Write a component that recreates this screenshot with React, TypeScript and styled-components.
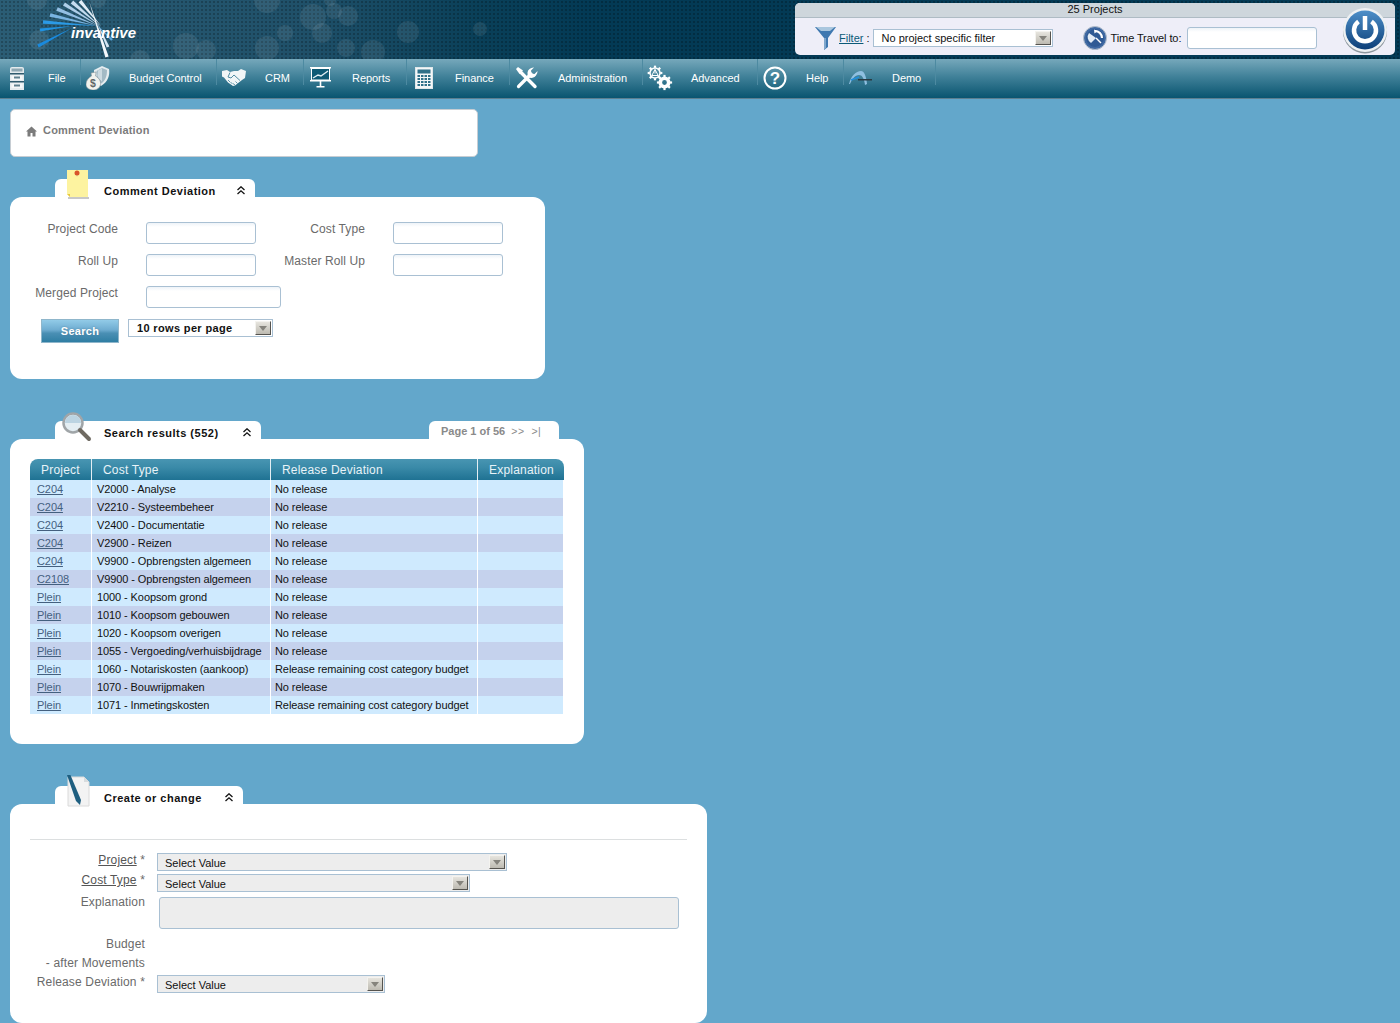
import * as React from 'react'
import styled, {createGlobalStyle} from 'styled-components';

const FONT = '"Liberation Sans", Arial, sans-serif';

const GlobalStyle = createGlobalStyle`
  html, body {
    margin: 0;
    padding: 0;
    background: #63a7cb;
    font-family: ${FONT};
    font-size: 11px;
  }
  * {
    box-sizing: border-box;
  }
`;

const NAV_ITEMS = [
  {label: 'File', icon: 'file', width: 81},
  {label: 'Budget Control', icon: 'budget', width: 136},
  {label: 'CRM', icon: 'crm', width: 87},
  {label: 'Reports', icon: 'reports', width: 103},
  {label: 'Finance', icon: 'finance', width: 103},
  {label: 'Administration', icon: 'tools', width: 133},
  {label: 'Advanced', icon: 'gears', width: 115},
  {label: 'Help', icon: 'help', width: 86},
  {label: 'Demo', icon: 'demo', width: 92},
];

const ROWS = [
  ['C204', 'V2000 - Analyse', 'No release'],
  ['C204', 'V2210 - Systeembeheer', 'No release'],
  ['C204', 'V2400 - Documentatie', 'No release'],
  ['C204', 'V2900 - Reizen', 'No release'],
  ['C204', 'V9900 - Opbrengsten algemeen', 'No release'],
  ['C2108', 'V9900 - Opbrengsten algemeen', 'No release'],
  ['Plein', '1000 - Koopsom grond', 'No release'],
  ['Plein', '1010 - Koopsom gebouwen', 'No release'],
  ['Plein', '1020 - Koopsom overigen', 'No release'],
  ['Plein', '1055 - Vergoeding/verhuisbijdrage', 'No release'],
  ['Plein', '1060 - Notariskosten (aankoop)', 'Release remaining cost category budget'],
  ['Plein', '1070 - Bouwrijpmaken', 'No release'],
  ['Plein', '1071 - Inmetingskosten', 'Release remaining cost category budget'],
];

const BOKEH = [
  [313, 17, 13], [348, 16, 10], [334, 11, 8], [322, 33, 10], [346, 48, 9], [373, 52, 12],
  [408, 32, 11], [285, 33, 8], [267, 0, 13], [267, 48, 12], [186, 46, 13], [206, 50, 10],
  [39, 40, 10], [37, 0, 10], [98, 0, 8], [330, 0, 6], [480, 29, 7], [140, 60, 10],
];

// outer x, outer y, inner x, inner y, half width, colour
const RAYS: Array<[number, number, number, number, number, string]> = [
  [38, 46, 72, 28, 1.6, '#1a8ade'],
  [40, 30, 72, 26, 1.6, '#1f92e2'],
  [43, 22, 97, 26, 1.8, '#2b9ae6'],
  [50, 15, 97, 26, 1.8, '#79b4e2'],
  [57, 9, 98, 26, 1.9, '#94bfe4'],
  [64, 4, 99, 26, 1.9, '#aecee9'],
  [72, 2, 100, 26, 1.9, '#c6ddf0'],
  [80, 1, 101, 26, 1.8, '#e2eef8'],
  [107, 57, 89, 1, 1.7, '#f4f8fc'],
  [108, 47, 97, 22, 1.5, '#d3e4f3'],
  [112, 40, 96, 24, 1.2, '#5aa6dc'],
];

const rayPoints = ([x1, y1, x2, y2, w]: [number, number, number, number, number, string]) => {
  const dx = x2 - x1;
  const dy = y2 - y1;
  const len = Math.sqrt(dx * dx + dy * dy);
  const nx = (-dy / len) * w;
  const ny = (dx / len) * w;
  return `${x1 + nx},${y1 + ny} ${x1 - nx},${y1 - ny} ${x2},${y2}`;
};

const Header = styled.header`
  position: relative;
  height: 59px;
  display: flex;
  background-color: #033a55;
  background-image:
    radial-gradient(rgba(0, 0, 0, 0.22) 1px, transparent 1px),
    linear-gradient(90deg, #2b5d75 0%, #1f5069 22%, #0a4059 34%, #033a55 42%);
  background-size: 4px 4px, 100% 100%;
  overflow: hidden;
`;

const BokehLayer = styled.svg`
  position: absolute;
  left: 0;
  top: 0;
`;

const LogoBox = styled.div`
  position: relative;
  width: 150px;
  height: 59px;
`;

const LogoText = styled.span`
  position: absolute;
  left: 71px;
  top: 24px;
  color: #fff;
  font: italic bold 15px/18px ${FONT};
`;

const ProjectPanel = styled.div`
  position: relative;
  width: 600px;
  height: 52px;
  margin: 3px 5px 0 auto;
  background: #eeeef8;
  border-radius: 5px;
`;

const ProjectCount = styled.div`
  height: 15px;
  background: #ced6dc;
  border-bottom: 1px solid #aebbc4;
  border-radius: 5px 5px 0 0;
  text-align: center;
  font-size: 11px;
  line-height: 13px;
  color: #111;
`;

const ProjectTools = styled.div`
  display: flex;
  align-items: center;
  height: 37px;
  padding: 3px 0 0 20px;
  color: #111;
`;

const FilterLink = styled.a`
  margin-left: 3px;
  color: #0b5a78;
  text-decoration: underline;
`;

const FilterColon = styled.span`
  margin: 0 3px 0 3px;
`;

const TimeIcon = styled.svg`
  margin: 0 4px 0 30px;
`;

const TimeLabel = styled.span`
  margin-right: 6px;
  letter-spacing: -0.1px;
  white-space: nowrap;
`;

const PowerButton = styled.svg`
  position: absolute;
  right: 7px;
  top: 3px;
`;

const NavBar = styled.nav`
  height: 40px;
  display: flex;
  background: linear-gradient(#76a8bb 0%, #3f8098 45%, #0a5570 97%, #5d7f90 97%);
`;

const NavItem = styled.a<{$width: number}>`
  position: relative;
  width: ${p => p.$width}px;
  height: 26px;
  padding-left: 48px;
  border-right: 1px solid #4d8aa1;
  color: #fff;
  font-size: 11px;
  letter-spacing: -0.05px;
  line-height: 38px;
  white-space: nowrap;
`;

const NavIcon = styled.span`
  position: absolute;
  left: 4px;
  top: 6px;
  width: 26px;
  height: 26px;
  display: flex;
  align-items: center;
  justify-content: center;
  color: #fff;
  line-height: 0;
`;

const Content = styled.main`
  padding: 10px 0 0 10px;
`;

const Breadcrumb = styled.div`
  width: 468px;
  height: 48px;
  display: flex;
  align-items: flex-start;
  gap: 6px;
  padding: 14px 0 0 15px;
  background: #fff;
  border: 1px solid #c6cdd3;
  border-radius: 5px;
  color: #7b7b7b;
  font-weight: bold;
  font-size: 11px;
  letter-spacing: 0.2px;
  line-height: 13px;
`;

const HomeIcon = styled.svg`
  margin-top: 2px;
`;

const Panel = styled.section<{$width: number; $gap: number}>`
  width: ${p => p.$width}px;
  margin-top: ${p => p.$gap}px;
`;

const TabRow = styled.div`
  display: flex;
  justify-content: space-between;
  padding: 0 25px 0 45px;
`;

const Tab = styled.div<{$width: number}>`
  position: relative;
  width: ${p => p.$width}px;
  height: 18px;
  padding: 6px 0 0 49px;
  display: flex;
  align-items: center;
  background: #fff;
  border-radius: 6px 6px 0 0;
  color: #111;
  font-weight: bold;
  font-size: 11px;
  letter-spacing: 0.5px;
  white-space: nowrap;
`;

const TabIcon = styled.svg<{$left: number; $drop: number}>`
  position: absolute;
  left: ${p => p.$left}px;
  bottom: -${p => p.$drop}px;
`;

const Chevrons = styled.svg`
  position: absolute;
  top: 7px;
  right: 10px;
`;

const Pager = styled.div`
  width: 130px;
  height: 18px;
  padding: 4px 0 0 12px;
  background: #fff;
  border-radius: 6px 6px 0 0;
  color: #8a8a8a;
  font-weight: bold;
  font-size: 11px;
  line-height: 12px;
  white-space: pre;
`;

const PagerArrows = styled.span`
  font-size: 10.5px;
  font-weight: normal;
  letter-spacing: 0.5px;
`;

const PanelBody = styled.div<{$pad: string}>`
  padding: ${p => p.$pad};
  background: #fff;
  border-radius: 12px;
`;

const FilterGrid = styled.div`
  display: grid;
  grid-template-columns: 108px 110px 81px 110px;
  grid-auto-rows: 22px;
  column-gap: 28px;
  row-gap: 10px;
  width: 100%;
`;

const FilterLabel = styled.label`
  color: #6a6a6a;
  font-size: 12px;
  letter-spacing: 0.1px;
  line-height: 15px;
  text-align: right;
  white-space: nowrap;
`;

const TextInput = styled.input<{$width?: number}>`
  width: ${p => p.$width || 110}px;
  height: 22px;
  padding: 0 4px;
  background: linear-gradient(#eef3f8 0, #fff 4px);
  border: 1px solid #a9c0d3;
  border-radius: 3px;
  outline: none;
`;

const WideCell = styled.div`
  grid-column: 2 / span 3;
`;

const SearchRow = styled.div`
  display: flex;
  align-items: flex-start;
  gap: 9px;
  margin-top: 11px;
  padding-left: 31px;
`;

const SearchButton = styled.button`
  width: 78px;
  height: 24px;
  padding: 0;
  margin: 0;
  background: linear-gradient(#92cbe8 0%, #6eacd0 45%, #4a8fb4 60%, #2f7ea3 100%);
  border: 1px solid #8fb6cb;
  color: #fff;
  font: bold 11px ${FONT};
  letter-spacing: 0.3px;
  text-shadow: 0 0 2px #4a7f9c;
`;

const SelectBox = styled.div<{$width: number; $disabled?: boolean; $bold?: boolean}>`
  position: relative;
  width: ${p => p.$width}px;
  height: 18px;
  padding-left: ${p => (p.$disabled ? 7 : 8)}px;
  background: ${p => (p.$disabled ? '#ededed' : '#fff')};
  border: 1px solid #a9c0d3;
  color: #111;
  font-size: 11px;
  font-weight: ${p => (p.$bold ? 'bold' : 'normal')};
  letter-spacing: ${p => (p.$bold ? '0.35px' : '0')};
  line-height: ${p => (p.$disabled ? 19 : 17)}px;
  white-space: nowrap;
`;

const SelectArrow = styled.span`
  position: absolute;
  top: 1px;
  right: 1px;
  width: 16px;
  height: 14px;
  display: flex;
  align-items: center;
  justify-content: center;
  background: linear-gradient(#e6e4de, #bdbab1);
  border: 1px solid;
  border-color: #f4f3ef #55534e #55534e #f4f3ef;
  &::after {
    content: '';
    border-left: 4px solid transparent;
    border-right: 4px solid transparent;
    border-top: 5px solid #85837c;
  }
`;

const ResultsTable = styled.table`
  width: 534px;
  border-collapse: separate;
  border-spacing: 0;
  table-layout: fixed;
`;

const HeadCell = styled.th<{$width: number; $left?: boolean; $right?: boolean}>`
  width: ${p => p.$width}px;
  height: 21px;
  padding: 0 0 0 11px;
  background: linear-gradient(#4895b2 0%, #3a8aa8 40%, #1f7293 100%);
  border-right: ${p => (p.$right ? 'none' : '1px solid #e3eef3')};
  border-radius: ${p => (p.$left ? '8px' : '0')} ${p => (p.$right ? '8px' : '0')} 0 0;
  color: #e8f3f8;
  font-size: 12px;
  font-weight: normal;
  letter-spacing: 0.2px;
  text-align: left;
`;

const Row = styled.tr<{$odd: boolean}>`
  background: ${p => (p.$odd ? '#c5d2ed' : '#cfeafe')};
`;

const Cell = styled.td<{$pad: number}>`
  height: 18px;
  padding: 0 0 0 ${p => p.$pad}px;
  border-right: 1px solid #fff;
  color: #111;
  font-size: 11px;
  letter-spacing: -0.09px;
  line-height: 18px;
  white-space: nowrap;
  overflow: hidden;
`;

const RowLink = styled.a`
  color: #44607f;
  text-decoration: underline;
`;

const Rule = styled.hr`
  height: 1px;
  margin: 0;
  border: none;
  background: #dcdfe0;
`;

const FieldRow = styled.div<{$top: number; $height?: number}>`
  display: flex;
  align-items: flex-start;
  gap: 12px;
  margin-top: ${p => p.$top}px;
  height: ${p => (p.$height ? `${p.$height}px` : 'auto')};
`;

const FieldLabel = styled.div<{$lift?: number}>`
  width: 115px;
  margin-top: -${p => p.$lift || 0}px;
  color: #6a6a6a;
  font-size: 12px;
  letter-spacing: 0.15px;
  line-height: 15px;
  text-align: right;
  white-space: pre;
`;

const Required = styled.a`
  color: #555;
  text-decoration: underline;
`;

const Explanation = styled.div`
  width: 520px;
  height: 32px;
  margin-left: 2px;
  background: #ededed;
  border: 1px solid #a9c0d3;
  border-radius: 3px;
`;

const Gear = ({cx, cy, r, ring}: {cx: number; cy: number; r: number; ring: number}) => (
  <g>
    <circle cx={cx} cy={cy} r={r} fill="none" stroke="#fff" strokeWidth={ring}/>
    {[0, 45, 90, 135, 180, 225, 270, 315].map(a => (
      <rect
        key={a}
        x={cx - 1.1}
        y={cy - r - ring / 2 - 1.6}
        width={2.2}
        height={2.2}
        fill="#fff"
        transform={`rotate(${a} ${cx} ${cy})`}
      />
    ))}
  </g>
);

const renderNavIcon = (name: string) => {
  switch (name) {
    case 'file':
      return (
        <svg width="16" height="23" viewBox="0 0 16 23">
          <path d="M1 2a2 2 0 0 1 2-2h10a2 2 0 0 1 2 2v21H1z" fill="#e4ebee"/>
          <rect x="2.500" y="1.500" width="11" height="3" fill="#8ea7b2"/>
          <rect x="1" y="6" width="14" height="1.500" fill="#2f5a6d"/>
          <rect x="2.500" y="8.500" width="11" height="4.500" fill="#f5f7f8"/>
          <rect x="5" y="9.500" width="6" height="2" fill="#5f808e"/>
          <rect x="1" y="14" width="14" height="1.500" fill="#2f5a6d"/>
          <rect x="2.500" y="16.500" width="11" height="4.500" fill="#f5f7f8"/>
          <rect x="5" y="17.500" width="6" height="2" fill="#5f808e"/>
        </svg>
      );
    case 'budget':
      return (
        <svg width="24" height="24" viewBox="0 0 24 24">
          <path d="M8 4l8-4 7 3c1 6-1 13-8 17-3-2-6-5-7-9z" fill="#e6edf0"/>
          <path d="M10.500 5l5.500-3 5 2c0 5-1 10-5.500 13.500-2-1.500-4-4-5-7z" fill="#a3bac5"/>
          <path d="M12 4.500l4-2 0 13c-2-1.500-3.500-3-4.500-6z" fill="#ccdae1"/>
          <path d="M5 7l5-1-.5 4c3.500 2 5.500 5 5 8.500-.5 3.500-3.500 5.500-7 5.500s-7.500-1.500-7.500-5.500c0-4 2.500-6.500 5.500-8.500z" fill="#f1f2ee" stroke="#7f8f96" strokeWidth=".6"/>
          <text x="4" y="21" fontFamily={FONT} fontSize="10.500" fontWeight="bold" fill="#5f6668">$</text>
        </svg>
      );
    case 'crm':
      return (
        <svg width="24" height="18" viewBox="0 0 24 18">
          <path d="M0 2l5-1 3 2 4-1 4 0 3-2 5 2-1 7-3 2-7 5.500-2 0.500-5-3.500-4-5-2-1z" fill="#f2f6f7"/>
          <path d="M8 3.500L6 8l3 1 3-3 6 5.500" fill="none" stroke="#3f8098" strokeWidth=".9"/>
          <path d="M6 11l2 2M8.500 13l2 2M11 14.500l2 1.500M13.500 12.500l2 2" fill="none" stroke="#3f8098" strokeWidth=".8"/>
        </svg>
      );
    case 'reports':
      return (
        <svg width="22" height="22" viewBox="0 0 22 22">
          <rect x="0" y="0" width="21" height="1.500" fill="#fff"/>
          <rect x="1.500" y="1.500" width="18" height="11.500" fill="#0d5a75" stroke="#fff"/>
          <path d="M3 11l5-3 3 1 7-5" stroke="#dfeef4" strokeWidth="1.400" fill="none"/>
          <rect x="0" y="13" width="21" height="1.500" fill="#fff"/>
          <rect x="9.700" y="14" width="1.600" height="5" fill="#fff"/>
          <rect x="6.500" y="19" width="8" height="1.500" fill="#fff"/>
        </svg>
      );
    case 'finance':
      return (
        <svg width="18" height="22" viewBox="0 0 18 22">
          <rect x="0.500" y="0.500" width="17" height="21" fill="#f4f7f8" stroke="#dfe7ea"/>
          <rect x="2.500" y="2.500" width="13" height="4" fill="#2f7089"/>
          {[8, 11, 14, 17].map(y => [2.5, 6, 9.5, 13].map(x => (
            <rect key={`${x}-${y}`} x={x} y={y} width="2.500" height="2" fill="#2f7089"/>
          )))}
        </svg>
      );
    case 'tools':
      return (
        <svg width="24" height="24" viewBox="0 0 24 24">
          <path d="M3.500 20.500L16 8" stroke="#fff" strokeWidth="3.200" strokeLinecap="round"/>
          <path d="M13.500 10.500a5.500 5.500 0 0 1 1-7.500 6 6 0 0 1 4.500-1.500l-3 3 .5 3 3 .5 3-3a6 6 0 0 1-1.500 4.500 5.500 5.500 0 0 1-7.500 1.500z" fill="#fff"/>
          <path d="M6 6.500l14 14" stroke="#fff" strokeWidth="3.400" strokeLinecap="round"/>
          <path d="M1 3l2-2 5 3.500-3.500 3.500z" fill="#fff"/>
        </svg>
      );
    case 'gears':
      return (
        <svg width="26" height="26" viewBox="0 0 26 26">
          <Gear cx={8} cy={8} r={5} ring={1.500}/>
          <path d="M8 4.500L4.800 10.500h6.400zM8 4.500v4" fill="none" stroke="#fff" strokeWidth="1"/>
          <Gear cx={17.500} cy={17.500} r={4.200} ring={3.600}/>
        </svg>
      );
    case 'help':
      return (
        <svg width="24" height="24" viewBox="0 0 24 24">
          <circle cx="12" cy="12" r="10.500" fill="none" stroke="#fff" strokeWidth="2"/>
          <text x="12" y="18" textAnchor="middle" fontFamily={FONT} fontSize="17" fontWeight="bold" fill="#fff">?</text>
        </svg>
      );
    default:
      return (
        <svg width="24" height="16" viewBox="0 0 24 16">
          <path d="M0 14C2 6 7 1 12 1c3 0 5 4 6 13l-2 1C15 8 13 5 10 5c-4 0-7 4-9 9z" fill="#8fbfe0"/>
          <path d="M2 10l8-3" stroke="#1f8fe0" strokeWidth="1.500"/>
          <rect x="9" y="9" width="14" height="1.500" fill="#2a3a42"/>
        </svg>
      );
  }
};

const Select = (props: {width: number; text: string; disabled?: boolean; bold?: boolean}) => (
  <SelectBox $width={props.width} $disabled={props.disabled} $bold={props.bold}>
    {props.text}
    <SelectArrow/>
  </SelectBox>
);

const ChevronUp = () => (
  <Chevrons width="8" height="9" viewBox="0 0 8 9">
    <path d="M0.500 4L4 0.800 7.500 4M0.500 8L4 4.800 7.500 8" fill="none" stroke="#111" strokeWidth="1.300"/>
  </Chevrons>
);

const Logo = () => (
  <LogoBox>
    <svg width="150" height="59" viewBox="0 0 150 59">
      {RAYS.map(ray => (
        <polygon key={`${ray[0]}-${ray[1]}`} points={rayPoints(ray)} fill={ray[5]}/>
      ))}
    </svg>
    <LogoText>invantive</LogoText>
  </LogoBox>
);

export default () => {
  return (
    <>
      <GlobalStyle/>
      <Header>
        <BokehLayer width="520" height="59" viewBox="0 0 520 59">
          {BOKEH.map(([cx, cy, r]) => (
            <circle key={`${cx}-${cy}`} cx={cx} cy={cy} r={r} fill="#fff" fillOpacity="0.08"/>
          ))}
        </BokehLayer>
        <Logo/>
        <ProjectPanel>
          <ProjectCount>25 Projects</ProjectCount>
          <ProjectTools>
            <svg width="21" height="24" viewBox="0 0 21 24">
              <path d="M0 1h21L13 12v9l-4 3V12z" fill="#3f78b0"/>
              <path d="M1 1h19l-5 4H6z" fill="#a9c6de"/>
              <path d="M9 12l2 0v10l-2 2z" fill="#7fa6cc"/>
            </svg>
            <FilterLink>Filter</FilterLink>
            <FilterColon>:</FilterColon>
            <Select width={180} text="No project specific filter"/>
            <TimeIcon width="24" height="26" viewBox="0 0 24 26">
              <circle cx="12" cy="13" r="11.500" fill="#3f69a3" stroke="#b4bfcc"/>
              <circle cx="12" cy="13" r="9" fill="#2f5a94"/>
              <path d="M12 6a7 7 0 0 1 7 7" fill="none" stroke="#fff" strokeWidth="2.200"/>
              <path d="M11 4.500l3.500 1.500-3 2.500z" fill="#fff"/>
              <path d="M6 8a7 7 0 0 0 2 10l5-5z" fill="#e4ecf5"/>
              <path d="M13 13l5 5" stroke="#fff" strokeWidth="1.400"/>
            </TimeIcon>
            <TimeLabel>Time Travel to:</TimeLabel>
            <TextInput $width={130}/>
          </ProjectTools>
          <PowerButton width="46" height="49" viewBox="0 0 46 49">
            <defs>
              <linearGradient id="powerFill" x1="0" y1="0" x2="0" y2="1">
                <stop offset="0" stopColor="#4d8fc9"/>
                <stop offset="1" stopColor="#0d3f78"/>
              </linearGradient>
            </defs>
            <circle cx="23" cy="25.500" r="22" fill="#8d979e"/>
            <circle cx="23" cy="24" r="22" fill="#eef1f3"/>
            <circle cx="23" cy="24" r="19.500" fill="url(#powerFill)"/>
            <path d="M16.500 15.500a11 11 0 1 0 13 0" fill="none" stroke="#fff" strokeWidth="4.500"/>
            <path d="M23 10v14" stroke="#fff" strokeWidth="4.500"/>
          </PowerButton>
        </ProjectPanel>
      </Header>
      <NavBar>
        {NAV_ITEMS.map(item => (
          <NavItem key={item.label} $width={item.width}>
            <NavIcon>{renderNavIcon(item.icon)}</NavIcon>
            {item.label}
          </NavItem>
        ))}
      </NavBar>
      <Content>
        <Breadcrumb>
          <HomeIcon width="11" height="11" viewBox="0 0 11 11">
            <path d="M5.500 0.500L11 5.500H9.500V10.500H6.500V7H4.500V10.500H1.500V5.500H0z" fill="#7b7b7b"/>
          </HomeIcon>
          Comment Deviation
        </Breadcrumb>

        <Panel $width={535} $gap={22}>
          <TabRow>
            <Tab $width={200}>
              <TabIcon $left={12} $drop={2} width="22" height="29" viewBox="0 0 22 29">
                <path d="M0 0h21v27H3l-3-3z" fill="#fdf3a0"/>
                <path d="M0 24h3v3z" fill="#e8c93c"/>
                <rect x="1" y="27" width="21" height="2" fill="#c8c8c8"/>
                <path d="M10 7l-0.500-3h1z" fill="#a8a08a"/>
                <circle cx="10" cy="3" r="2.500" fill="#d9542b"/>
              </TabIcon>
              Comment Deviation
              <ChevronUp/>
            </Tab>
          </TabRow>
          <PanelBody $pad="25px 0 36px 0">
            <FilterGrid>
              <FilterLabel>Project Code</FilterLabel>
              <TextInput/>
              <FilterLabel>Cost Type</FilterLabel>
              <TextInput/>
              <FilterLabel>Roll Up</FilterLabel>
              <TextInput/>
              <FilterLabel>Master Roll Up</FilterLabel>
              <TextInput/>
              <FilterLabel>Merged Project</FilterLabel>
              <WideCell><TextInput $width={135}/></WideCell>
            </FilterGrid>
            <SearchRow>
              <SearchButton>Search</SearchButton>
              <Select width={145} text="10 rows per page" bold/>
            </SearchRow>
          </PanelBody>
        </Panel>

        <Panel $width={574} $gap={42}>
          <TabRow>
            <Tab $width={206}>
              <TabIcon $left={7} $drop={3} width="30" height="30" viewBox="0 0 30 30">
                <circle cx="11" cy="11" r="9.500" fill="#e4eef3" stroke="#a0a5a8" strokeWidth="2.500"/>
                <path d="M3 11a8 8 0 0 1 16 0z" fill="#bcd4e2"/>
                <path d="M18 18l9 9" stroke="#6f6a62" strokeWidth="4" strokeLinecap="round"/>
              </TabIcon>
              Search results (552)
              <ChevronUp/>
            </Tab>
            <Pager>Page 1 of 56  <PagerArrows>{'>>  >|'}</PagerArrows></Pager>
          </TabRow>
          <PanelBody $pad="20px 20px 30px 20px">
            <ResultsTable>
              <thead>
                <tr>
                  <HeadCell $width={62} $left>Project</HeadCell>
                  <HeadCell $width={179}>Cost Type</HeadCell>
                  <HeadCell $width={207}>Release Deviation</HeadCell>
                  <HeadCell $width={86} $right>Explanation</HeadCell>
                </tr>
              </thead>
              <tbody>
                {ROWS.map((row, i) => (
                  <Row key={row[1] + i} $odd={i % 2 === 1}>
                    <Cell $pad={7}><RowLink>{row[0]}</RowLink></Cell>
                    <Cell $pad={5}>{row[1]}</Cell>
                    <Cell $pad={4}>{row[2]}</Cell>
                    <Cell $pad={5}/>
                  </Row>
                ))}
              </tbody>
            </ResultsTable>
          </PanelBody>
        </Panel>

        <Panel $width={697} $gap={42}>
          <TabRow>
            <Tab $width={188}>
              <TabIcon $left={9} $drop={3} width="27" height="32" viewBox="0 0 27 32">
                <path d="M4 2h16l5 5v24H4z" fill="#f3f3f3" stroke="#dadada"/>
                <path d="M20 2v5h5z" fill="#d8dcde"/>
                <path d="M3 0l3-1 11 26-1 5-4-4z" fill="#1f5f80"/>
              </TabIcon>
              Create or change
              <ChevronUp/>
            </Tab>
          </TabRow>
          <PanelBody $pad="35px 20px 30px 20px">
            <Rule/>
            <FieldRow $top={13}>
              <FieldLabel><Required>Project</Required> *</FieldLabel>
              <Select width={350} text="Select Value" disabled/>
            </FieldRow>
            <FieldRow $top={3}>
              <FieldLabel $lift={1}><Required>Cost Type</Required> *</FieldLabel>
              <Select width={313} text="Select Value" disabled/>
            </FieldRow>
            <FieldRow $top={5}>
              <FieldLabel $lift={2}>Explanation</FieldLabel>
              <Explanation/>
            </FieldRow>
            <FieldRow $top={8} $height={19}>
              <FieldLabel>Budget</FieldLabel>
            </FieldRow>
            <FieldRow $top={0} $height={19}>
              <FieldLabel>- after Movements</FieldLabel>
            </FieldRow>
            <FieldRow $top={0}>
              <FieldLabel>Release Deviation *</FieldLabel>
              <Select width={228} text="Select Value" disabled/>
            </FieldRow>
          </PanelBody>
        </Panel>
      </Content>
    </>
  );
};
